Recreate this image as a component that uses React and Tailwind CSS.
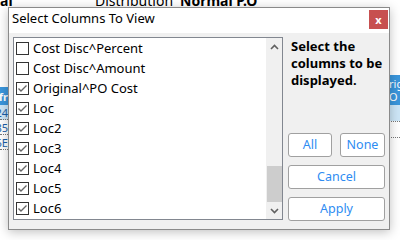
import React from 'react';

// ── Data ────────────────────────────────────────────────────
const COLUMNS = [
  { label: 'Cost Disc^Percent', checked: false },
  { label: 'Cost Disc^Amount', checked: false },
  { label: 'Original^PO Cost', checked: true },
  { label: 'Loc', checked: true },
  { label: 'Loc2', checked: true },
  { label: 'Loc3', checked: true },
  { label: 'Loc4', checked: true },
  { label: 'Loc5', checked: true },
  { label: 'Loc6', checked: true },
];

const FONT = { fontFamily: '"Noto Sans", "Open Sans", sans-serif' };

function CheckBox({ checked }) {
  return (
    <div className="w-[13px] h-[13px] border border-[#333] bg-white flex items-center justify-center shrink-0">
      {checked && (
        <svg width="11" height="11" viewBox="0 0 11 11">
          <polyline points="1.5,5.5 4,8 9.5,2.5" fill="none" stroke="#666" strokeWidth="1.4" />
        </svg>
      )}
    </div>
  );
}

function Chevron({ up }) {
  return (
    <svg width="9" height="6" viewBox="0 0 9 6">
      <polyline
        points={up ? '1,5 4.5,1.5 8,5' : '1,1 4.5,4.5 8,1'}
        fill="none"
        stroke="#606060"
        strokeWidth="1.6"
      />
    </svg>
  );
}

function Btn({ children, className = '' }) {
  return (
    <button
      className={`h-[24px] bg-white border border-[#a0a0a0] rounded-[3px] text-[12.5px] text-[#2e8cf2] flex items-center justify-center ${className}`}
    >
      {children}
    </button>
  );
}

// ── Background page (mostly hidden by the dialog) ───────────
function BackgroundPage() {
  return (
    <div className="w-[400px] h-[240px] bg-white overflow-hidden text-black" style={FONT}>
      <div className="flex items-end h-[8px] text-[14px] leading-none overflow-hidden">
        <span className="font-bold w-[95px]">al</span>
        <span className="w-[85px]">Distribution</span>
        <span className="font-bold">Normal P.O</span>
      </div>
      <div className="flex justify-between mt-[67px]">
        <div className="w-[8px] mt-[12px] text-[11px] leading-none overflow-hidden flex flex-col">
          <div className="w-full h-[18px] bg-[#3a96dc] text-white font-bold flex items-center justify-end overflow-hidden">dfr</div>
          <div className="w-full h-[15px] bg-[#cde6f7] text-[#1a5fa8] flex items-center justify-end overflow-hidden border-b border-dotted border-[#777]">24</div>
          <div className="w-full h-[15px] text-[#1a5fa8] flex items-center justify-end overflow-hidden border-b border-dotted border-[#777]">85</div>
          <div className="w-full h-[15px] text-[#1a5fa8] flex items-center justify-end overflow-hidden border-b border-dotted border-[#777]">6E</div>
        </div>
        <div className="w-[11px] text-[11px] overflow-hidden flex flex-col">
          <div className="w-full h-[30px] bg-[#3a96dc] text-white leading-[13px] pt-[2px] whitespace-nowrap overflow-hidden">rig<br />O C</div>
          <div className="w-full h-[16px] bg-[#cde6f7]" />
          <div className="w-full h-[16px] border-t border-dotted border-[#777]" />
          <div className="w-full h-[16px] border-t border-dotted border-[#777]" />
        </div>
      </div>
    </div>
  );
}

export default function App() {
  return (
    <div className="relative w-[400px] h-[240px] overflow-hidden">
      <BackgroundPage />

      {/* ── Dialog ─────────────────────────────────────────── */}
      <div
        className="absolute left-[8px] top-[7px] w-[382px] h-[223px] border border-[#8a8a8a] bg-[#f0f0f0] flex flex-col shadow-[0_2px_10px_rgba(0,0,0,0.25)]"
        style={FONT}
      >
        {/* Title bar */}
        <div className="h-[25px] bg-white flex items-start justify-between shrink-0">
          <span className="text-[13px] text-black pl-[3px] pt-[4px] leading-none">Select Columns To View</span>
          <div className="w-[19px] h-[19px] mt-[2px] mr-[1px] bg-[#c75050] text-white text-[11px] font-bold flex items-center justify-center leading-none">
            x
          </div>
        </div>

        {/* Body */}
        <div className="flex pt-[4px] pl-[4px]">
          {/* List box */}
          <div className="w-[270px] h-[183px] border border-[#828790] bg-white flex">
            <div className="flex-1 flex flex-col">
              {COLUMNS.map((c) => (
                <div key={c.label} className="h-[20px] flex items-center pl-[2px] gap-[4px]">
                  <CheckBox checked={c.checked} />
                  <span className="text-[13px] text-black leading-none">{c.label}</span>
                </div>
              ))}
            </div>
            {/* Scrollbar */}
            <div className="w-[16px] bg-[#f0f0f0] flex flex-col items-center">
              <div className="h-[17px] flex items-center justify-center">
                <Chevron up />
              </div>
              <div className="flex-1 w-full flex flex-col justify-end">
                <div className="h-[36px] w-[15px] mx-auto bg-[#cdcdcd]" />
              </div>
              <div className="h-[17px] flex items-center justify-center">
                <Chevron />
              </div>
            </div>
          </div>

          {/* Right panel */}
          <div className="w-[97px] ml-[5px] flex flex-col">
            <p className="pl-[3px] pt-[1px] text-[13px] font-bold leading-[17px] text-black">
              Select the columns to be displayed.
            </p>
            <div className="mt-[44px] flex flex-col gap-[8px]">
              <div className="flex gap-[8px]">
                <Btn className="w-[44px]">All</Btn>
                <Btn className="w-[45px]">None</Btn>
              </div>
              <Btn className="w-[97px]">Cancel</Btn>
              <Btn className="w-[97px]">Apply</Btn>
            </div>
          </div>
        </div>
      </div>
    </div>
  );
}
